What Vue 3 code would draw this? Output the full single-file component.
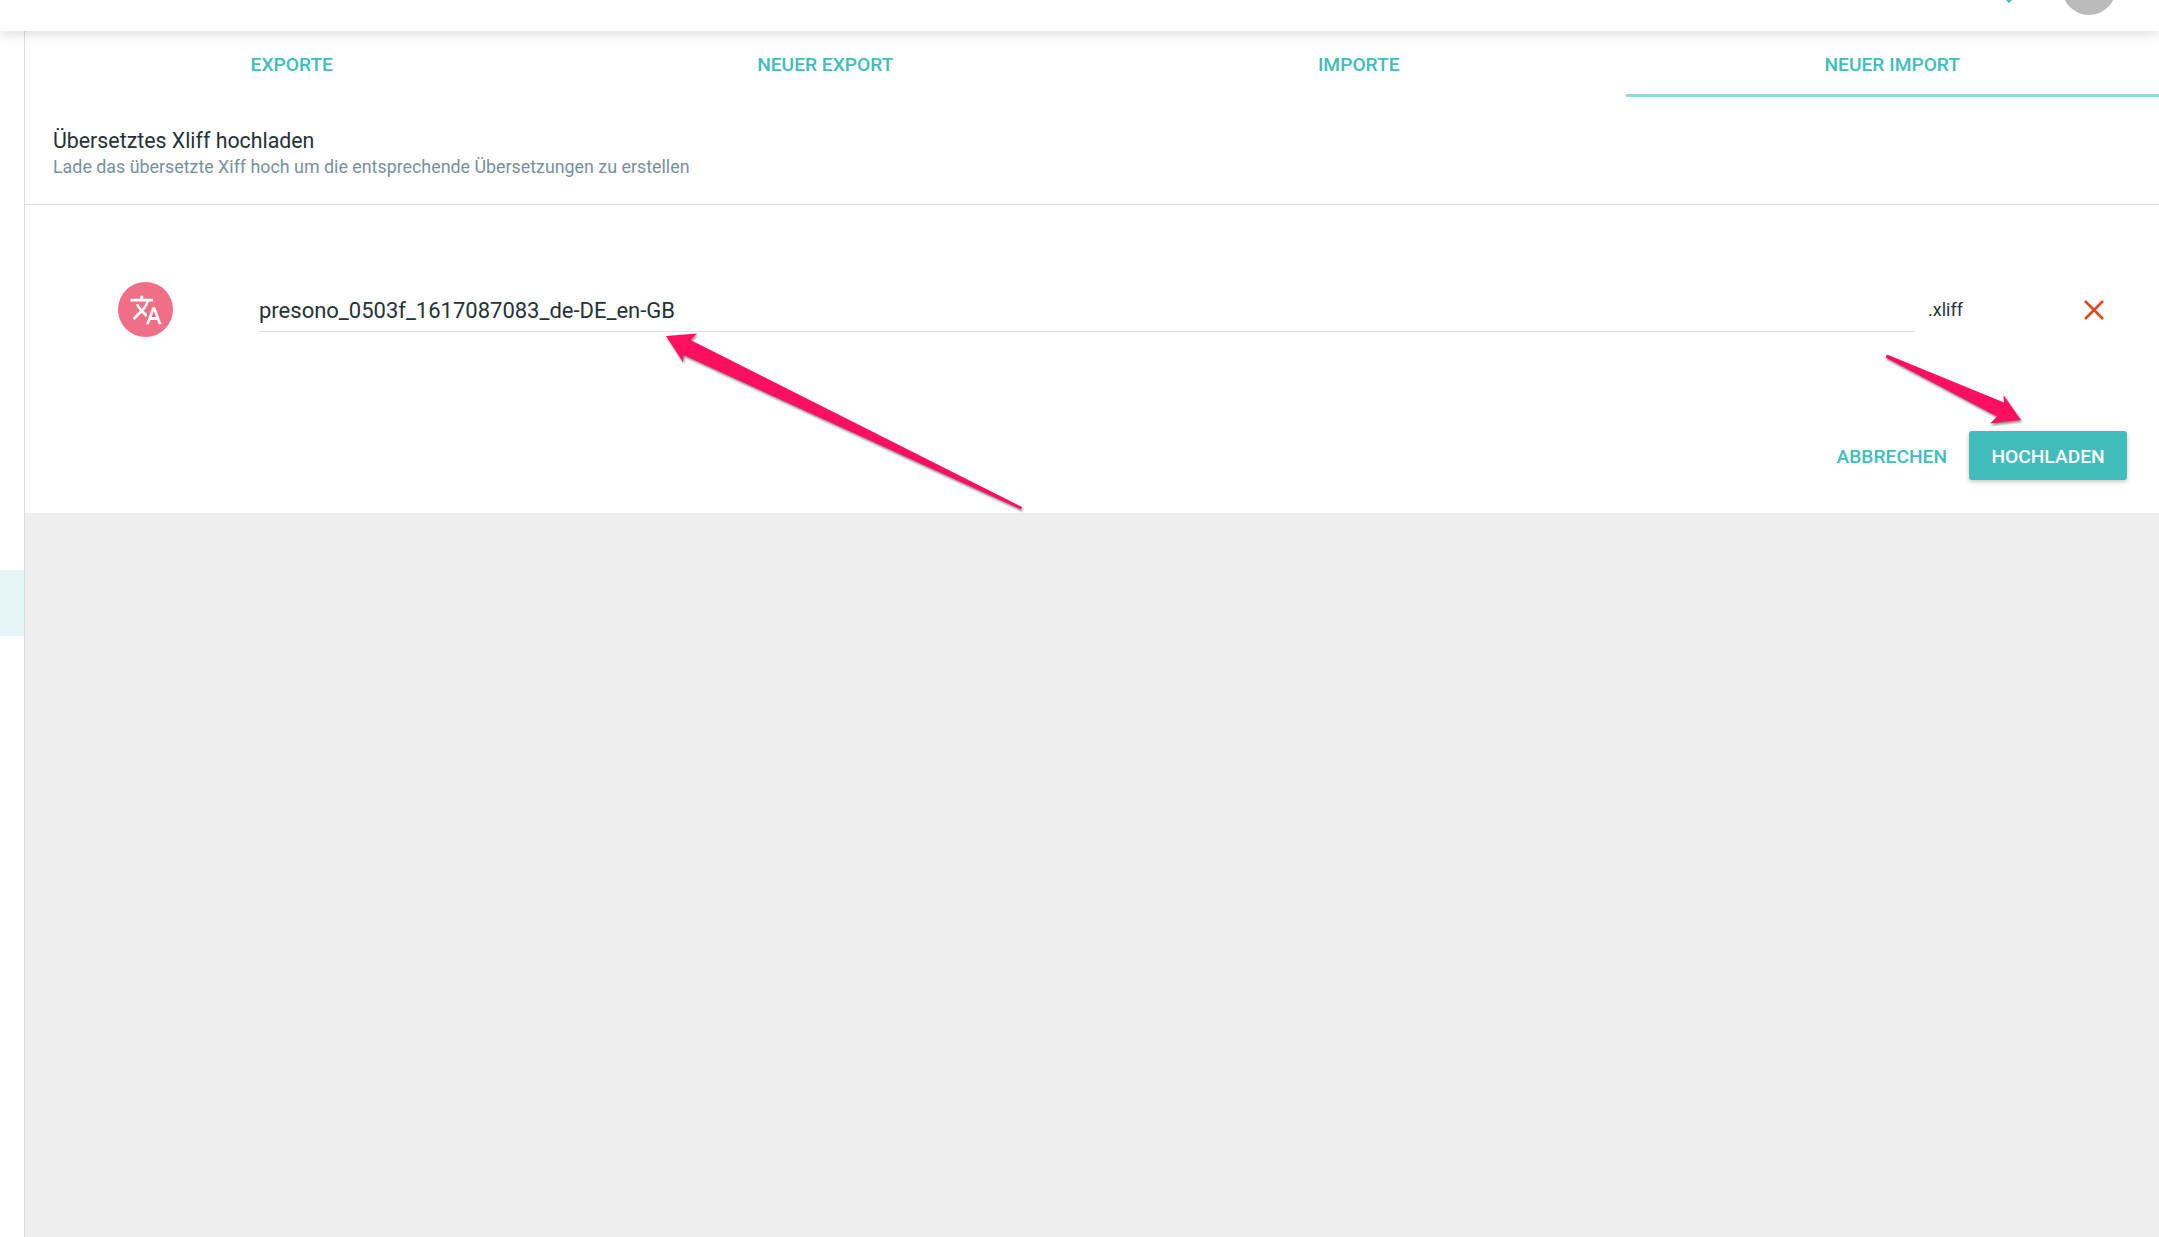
<template>
  <div class="page">
    <header class="topbar">
      <svg class="bell" width="24" height="24" viewBox="0 0 24 24"><path d="M8 18l4 4 4-4" fill="none" stroke="#41bdbb" stroke-width="3" /></svg>
      <div class="avatar"></div>
    </header>
    <div class="body">
      <aside class="sidebar">
        <div class="side-active"></div>
      </aside>
      <main class="main">
        <section class="panel">
          <nav class="tabs">
            <a
              v-for="tab in tabs"
              :key="tab"
              class="tab"
              :class="{ active: tab === activeTab }"
            >{{ tab }}</a>
          </nav>
          <div class="head">
            <div class="title">Übersetztes Xliff hochladen</div>
            <div class="subtitle">Lade das übersetzte Xiff hoch um die entsprechende Übersetzungen zu erstellen</div>
          </div>
          <div class="file-row">
            <div class="file-icon">
              <svg width="34" height="34" viewBox="0 0 24 24">
                <path fill="#fff" d="M12.87 15.07l-2.54-2.51.03-.03c1.74-1.94 2.98-4.17 3.71-6.53H17V4h-7V2H8v2H1v1.99h11.17C11.5 7.92 10.44 9.75 9 11.35 8.07 10.32 7.3 9.19 6.69 8h-2c.73 1.63 1.73 3.17 2.98 4.56l-5.09 5.02L4 19l5-5 3.11 3.11.76-2.04zM18.5 10h-2L12 22h2l1.12-3h4.75L21 22h2l-4.5-12zm-2.62 7l1.62-4.33L19.12 17h-3.24z" />
              </svg>
            </div>
            <div class="file-name">presono_0503f_1617087083_de-DE_en-GB</div>
            <div class="file-ext">.xliff</div>
            <svg class="file-remove" width="20" height="20" viewBox="0 0 20 20">
              <path d="M1 1l18 18M19 1L1 19" stroke="#dc4a1c" stroke-width="2.6" fill="none" />
            </svg>
          </div>
          <div class="actions">
            <button class="btn-text">ABBRECHEN</button>
            <button class="btn-primary">HOCHLADEN</button>
          </div>
        </section>
        <div class="empty"></div>
      </main>
    </div>
    <!-- annotation arrows on top of the screenshot -->
    <svg class="arrows" width="2159" height="1237" viewBox="0 0 2159 1237">
      <polygon fill="#ff0f5f" points="666,336 697,333.5 690.5,340 1022,507 1021,509.5 683.5,355 683,362" />
      <polygon fill="#ff0f5f" points="1887,354.5 2004,402.5 2003.5,395 2021,420 1990,423.5 1997,416.5 1885.5,357.5" />
    </svg>
  </div>
</template>

<script setup>
const tabs = ['EXPORTE', 'NEUER EXPORT', 'IMPORTE', 'NEUER IMPORT']
const activeTab = 'NEUER IMPORT'
</script>

<style>
html, body {
  margin: 0;
  background: #fff;
}
</style>

<style scoped>
.page {
  position: relative;
  height: 1237px;
  overflow: hidden;
  display: flex;
  flex-direction: column;
  font-family: Roboto, "Liberation Sans", sans-serif;
  color: #263238;
}

.topbar {
  position: relative;
  z-index: 2;
  height: 31px;
  flex: none;
  background: #fff;
  overflow: hidden;
  display: flex;
  justify-content: flex-end;
  align-items: flex-end;
  box-shadow: 0 2px 14px rgba(0, 0, 0, 0.16);
}

.bell {
  margin: 0 41px 28px 0;
}

.avatar {
  width: 54px;
  height: 54px;
  margin: 0 43px 16px 0;
  border-radius: 50%;
  background: #bbb;
}

.body {
  flex: 1;
  display: flex;
}

.sidebar {
  width: 24px;
  flex: none;
  border-right: 1px solid #ddd;
  padding-top: 539px;
}

.side-active {
  height: 66px;
  background: #e3f5f4;
}

.main {
  flex: 1;
  display: flex;
  flex-direction: column;
}

.panel {
  background: #fff;
  height: 482px;
  flex: none;
}

.tabs {
  display: flex;
  height: 66px;
}

.tab {
  flex: 1;
  text-align: center;
  font-size: 19.2px;
  font-weight: 500;
  line-height: 68px;
  color: #41bdbb;
  box-sizing: border-box;
}

.tab.active {
  border-bottom: 3px solid #8edad5;
}

.head {
  height: 108px;
  box-sizing: border-box;
  padding: 30px 28px 0;
  border-bottom: 1px solid #e0e0e0;
}

.title {
  font-size: 21.33px;
  line-height: 27px;
  color: #263238;
}

.subtitle {
  font-size: 17.85px;
  line-height: 25px;
  color: #78909c;
}

.file-row {
  display: flex;
  align-items: center;
  height: 209px;
  padding-left: 93px;
}

.file-icon {
  width: 55px;
  height: 55px;
  flex: none;
  border-radius: 50%;
  background: #ef7086;
  display: flex;
  align-items: center;
  justify-content: center;
}

.file-name {
  width: 1655px;
  box-sizing: border-box;
  margin-left: 86px;
  height: 45px;
  line-height: 47px;
  font-size: 22px;
  color: #263238;
  border-bottom: 1px solid #e0e0e0;
}

.file-ext {
  width: 170px;
  padding-left: 14px;
  box-sizing: border-box;
  font-size: 18px;
}

.file-remove {
  flex: none;
}

.actions {
  display: flex;
  justify-content: flex-end;
  align-items: center;
  gap: 22px;
  padding: 17px 32px 0 0;
}

.btn-text,
.btn-primary {
  border: 0;
  font-family: inherit;
  font-size: 19.2px;
  font-weight: 500;
  padding: 2px 0 0;
}

.btn-text {
  background: none;
  color: #41bdbb;
}

.btn-primary {
  width: 158px;
  height: 49px;
  background: #41bdbb;
  color: #fff;
  border-radius: 3px;
  box-shadow: 0 2px 5px rgba(0, 0, 0, 0.22);
}

.empty {
  flex: 1;
  background: #eee;
}

.arrows {
  position: absolute;
  z-index: 3;
  left: 0;
  top: 0;
  pointer-events: none;
  filter: drop-shadow(1px 2px 1px rgba(0, 0, 0, 0.45));
}
</style>
